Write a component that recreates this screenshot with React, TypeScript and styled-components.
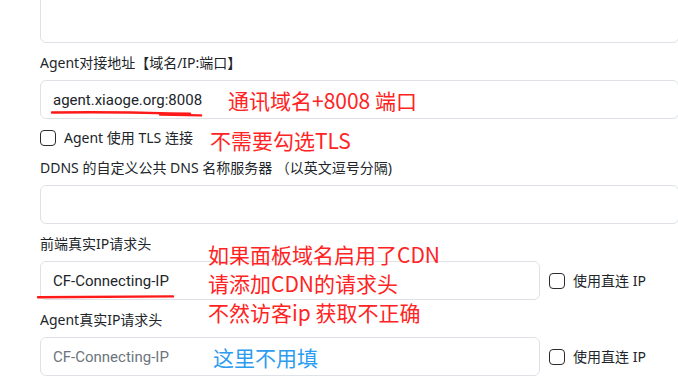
import styled, { createGlobalStyle } from 'styled-components';

const GlobalStyle = createGlobalStyle`
    html, body {
        margin: 0;
        padding: 0;
        background: #fff;
        overflow: hidden;
    }
    body {
        font-family: "Noto Sans", "Noto Sans CJK SC", sans-serif;
        color: #212529;
    }
`;

export default function App() {
    return (
        <>
            <GlobalStyle />
            <Form>
                <TextArea />

                <Group>
                    <Label>Agent对接地址【域名/IP:端口】</Label>
                    <FieldWrap>
                        <Input defaultValue="agent.xiaoge.org:8008" readOnly />
                        <Underline $left={10} $top={30} width="154" height="8" viewBox="0 0 154 8">
                            <path d="M2 2.5 Q60 1.6 120 3.4 L140 3.8" />
                            <path d="M110 4.6 L151 5.4" />
                        </Underline>
                        <Note $color="#ff2323" $left={188}>通讯域名+8008 端口</Note>
                    </FieldWrap>
                </Group>

                <CheckRow>
                    <CheckBox />
                    <CheckText>Agent 使用 TLS 连接</CheckText>
                    <InlineNote>不需要勾选TLS</InlineNote>
                </CheckRow>

                <Group>
                    <Label>DDNS 的自定义公共 DNS 名称服务器 （以英文逗号分隔)</Label>
                    <FieldWrap>
                        <Input />
                    </FieldWrap>
                </Group>

                <Group>
                    <Label>前端真实IP请求头</Label>
                    <SplitRow>
                        <FieldWrap $narrow>
                            <Input defaultValue="CF-Connecting-IP" readOnly />
                            <Underline $left={-4} $top={33} width="140" height="6" viewBox="0 0 140 6">
                                <path d="M2 3.2 Q70 2.6 137 2.4" />
                            </Underline>
                        </FieldWrap>
                        <SideCheck>
                            <CheckBox />
                            <CheckText>使用直连 IP</CheckText>
                        </SideCheck>
                    </SplitRow>
                    <NoteBlock>
                        如果面板域名启用了CDN
                        <br />
                        请添加CDN的请求头
                        <br />
                        不然访客ip 获取不正确
                    </NoteBlock>
                </Group>

                <Group>
                    <Label>Agent真实IP请求头</Label>
                    <SplitRow>
                        <FieldWrap $narrow>
                            <Input placeholder="CF-Connecting-IP" />
                            <Note $color="#2c9cf0" $left={173}>这里不用填</Note>
                        </FieldWrap>
                        <SideCheck>
                            <CheckBox />
                            <CheckText>使用直连 IP</CheckText>
                        </SideCheck>
                    </SplitRow>
                </Group>
            </Form>
        </>
    );
}

const Form = styled.div`
    display: flex;
    flex-direction: column;
    margin-left: 40px;
    width: 639px;
`;

const TextArea = styled.div`
    box-sizing: border-box;
    height: 50px;
    margin-top: -7px;
    border: 1px solid #dee2e6;
    border-radius: 6px;
    background: #fff;
`;

const Group = styled.div`
    position: relative;
    display: flex;
    flex-direction: column;
    margin-top: 9px;
`;

const Label = styled.div`
    font-size: 14px;
    line-height: 21px;
    height: 21px;
    margin-bottom: 7px;
    white-space: nowrap;
    color: #212529;
`;

const FieldWrap = styled.div<{ $narrow?: boolean }>`
    position: relative;
    width: ${({ $narrow }) => ($narrow ? '500px' : '100%')};
`;

const Input = styled.input`
    box-sizing: border-box;
    display: block;
    width: 100%;
    height: 39px;
    padding: 0 12px;
    border: 1px solid #dee2e6;
    border-radius: 6px;
    background: #fff;
    font-family: Roboto, "Noto Sans CJK SC", sans-serif;
    font-size: 15px;
    color: #212529;
    outline: none;

    &::placeholder {
        color: #6c757d;
    }
`;

const Underline = styled.svg<{ $left: number; $top: number }>`
    position: absolute;
    left: ${({ $left }) => $left}px;
    top: ${({ $top }) => $top}px;
    overflow: visible;

    path {
        fill: none;
        stroke: #ff1a1a;
        stroke-width: 2.4;
        stroke-linecap: round;
    }
`;

const Note = styled.span<{ $color: string; $left: number }>`
    position: absolute;
    left: ${({ $left }) => $left}px;
    top: 50%;
    transform: translateY(-50%);
    font-family: "Noto Sans CJK SC", "Noto Sans", sans-serif;
    font-size: 21px;
    line-height: 29px;
    white-space: nowrap;
    color: ${({ $color }) => $color};
`;

const NoteBlock = styled.div`
    position: absolute;
    left: 168px;
    top: 7px;
    font-family: "Noto Sans CJK SC", "Noto Sans", sans-serif;
    font-size: 21px;
    line-height: 29px;
    white-space: nowrap;
    color: #ff2323;
`;

const CheckRow = styled.div`
    display: flex;
    align-items: center;
    height: 21px;
    margin-top: 8px;
`;

const SplitRow = styled.div`
    display: flex;
    align-items: center;
`;

const SideCheck = styled.div`
    display: flex;
    align-items: center;
    margin-left: 9px;
`;

const CheckBox = styled.span`
    box-sizing: border-box;
    flex: none;
    width: 16px;
    height: 16px;
    border: 1px solid #2b2b2b;
    border-radius: 4px;
    background: #fff;
`;

const CheckText = styled.span`
    margin-left: 8px;
    font-size: 14px;
    line-height: 21px;
    white-space: nowrap;
`;

const InlineNote = styled.span`
    margin-left: 17px;
    margin-top: 6px;
    font-family: "Noto Sans CJK SC", "Noto Sans", sans-serif;
    font-size: 21px;
    line-height: 29px;
    white-space: nowrap;
    color: #ff2323;
`;
